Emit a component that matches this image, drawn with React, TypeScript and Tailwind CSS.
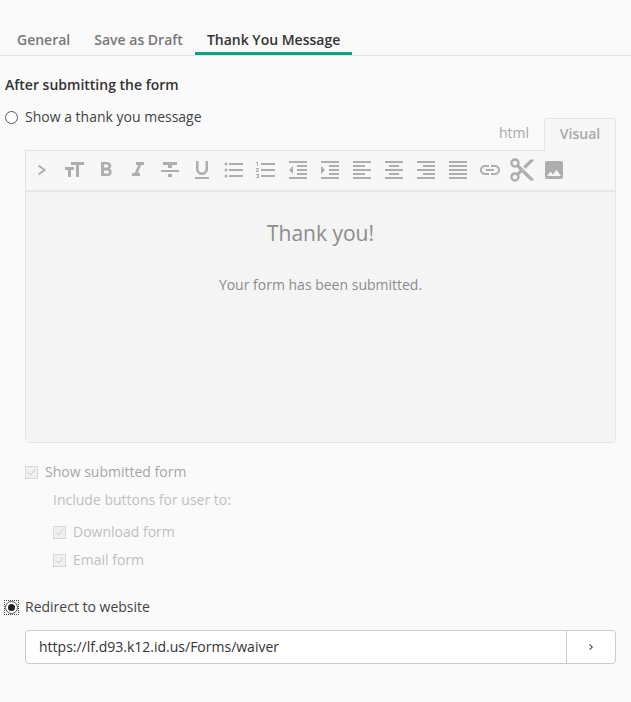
import {
  MdChevronRight,
  MdContentCut,
  MdFormatAlignCenter,
  MdFormatAlignJustify,
  MdFormatAlignLeft,
  MdFormatAlignRight,
  MdFormatBold,
  MdFormatIndentDecrease,
  MdFormatIndentIncrease,
  MdFormatItalic,
  MdFormatListBulleted,
  MdFormatListNumbered,
  MdFormatSize,
  MdFormatStrikethrough,
  MdFormatUnderlined,
  MdImage,
  MdLink,
} from 'react-icons/md';

function Chevron() {
  return (
    <svg width="10" height="12" viewBox="0 0 10 12" fill="none" stroke="currentColor" strokeWidth="2">
      <path d="M1.5 1.5 L7.5 6 L1.5 10.5" />
    </svg>
  );
}

const tools = [
  MdFormatSize,
  MdFormatBold,
  MdFormatItalic,
  MdFormatStrikethrough,
  MdFormatUnderlined,
  MdFormatListBulleted,
  MdFormatListNumbered,
  MdFormatIndentDecrease,
  MdFormatIndentIncrease,
  MdFormatAlignLeft,
  MdFormatAlignCenter,
  MdFormatAlignRight,
  MdFormatAlignJustify,
  MdLink,
];

function Check({ label, className }: { label: string; className: string }) {
  return (
    <label className={`flex items-center gap-[7px] h-5 ${className}`}>
      <span className="w-[13px] h-[13px] border border-[#d8d8d8] bg-[#f0f0f0] flex items-center justify-center">
        <svg width="11" height="11" viewBox="0 0 11 11" fill="none" stroke="#c8c8c8" strokeWidth="1">
          <path d="M2 5.5 L4.5 8 L9 2.5" />
        </svg>
      </span>
      <span>{label}</span>
    </label>
  );
}

export default function App() {
  return (
    <div className="min-h-[702px] bg-[#fafafa] font-['Open_Sans',sans-serif] text-sm text-[#444]">
      <div className="flex h-[56px] items-end border-b border-[#e2e2e2] pl-[5px]">
        <div className="flex h-[32px] font-semibold">
          <span className="px-3 pt-[7px] text-[#787878]">General</span>
          <span className="px-3 pt-[7px] text-[#787878]">Save as Draft</span>
          <span className="px-3 pt-[7px] border-b-[3px] border-[#12a085] text-[#333]">Thank You Message</span>
        </div>
      </div>

      <div className="pl-[5px] pr-[15px]">
        <p className="mt-[19px] h-5 leading-5 font-semibold text-[#333]">After submitting the form</p>

        <label className="mt-3 flex h-5 items-center gap-[7px]">
          <span className="w-[13px] h-[13px] rounded-full border border-[#555] bg-white" />
          <span>Show a thank you message</span>
        </label>

        <div className="ml-5 -mt-[9px]">
          <div className="flex justify-end text-[#a8a8a8]">
            <span className="px-[15px] pt-[5px] h-8 leading-5">html</span>
            <span className="relative z-10 -mb-px h-[33px] w-[72px] rounded-t border border-b-0 border-[#e4e4e4] bg-[#f7f7f7] pt-[5px] text-center font-semibold">
              Visual
            </span>
          </div>
          <div className="border border-[#e4e4e4] rounded-b">
            <div className="flex h-[41px] items-center border-b-2 border-[#e6e6e6] bg-[#f7f7f7] pb-[2px] text-[#aeaeae]">
              <span className="flex w-8 justify-center pr-px">
                <Chevron />
              </span>
              {tools.map((Tool, i) => (
                <span key={i} className="flex w-8 justify-center">
                  <Tool size={24} />
                </span>
              ))}
              <span className="flex w-8 justify-center">
                <MdContentCut size={28} />
              </span>
              <span className="flex w-8 justify-center">
                <MdImage size={24} />
              </span>
            </div>
            <div className="h-[250px] bg-[#f4f4f4] text-center text-[#8c8c8c]">
              <p className="pt-[25px] text-[21px] leading-[32px]">Thank you!</p>
              <p className="mt-[26px] leading-5">Your form has been submitted.</p>
            </div>
          </div>
        </div>

        <div className="ml-5 mt-[19px]">
          <Check label="Show submitted form" className="text-[#a6a6a6]" />
          <p className="ml-7 mt-2 h-5 leading-5 text-[#c0c0c0]">Include buttons for user to:</p>
          <Check label="Download form" className="ml-7 mt-3 text-[#c0c0c0]" />
          <Check label="Email form" className="ml-7 mt-2 text-[#c0c0c0]" />
        </div>

        <label className="mt-[27px] flex h-5 items-center gap-[7px]">
          <span className="w-[13px] h-[13px] outline-1 outline-dotted outline-[#444]">
            <span className="flex w-[13px] h-[13px] items-center justify-center rounded-full border border-[#555] bg-white">
              <span className="w-[7px] h-[7px] rounded-full bg-[#222]" />
            </span>
          </span>
          <span>Redirect to website</span>
        </label>

        <div className="ml-5 mt-[13px] flex h-[34px] rounded border border-[#cccccc] bg-white">
          <span className="flex-1 pl-[13px] leading-[32px] text-[#333]">https://lf.d93.k12.id.us/Forms/waiver</span>
          <span className="flex w-[49px] items-center justify-center border-l border-[#cccccc] text-[#444]">
            <MdChevronRight size={12} />
          </span>
        </div>
      </div>
    </div>
  );
}
